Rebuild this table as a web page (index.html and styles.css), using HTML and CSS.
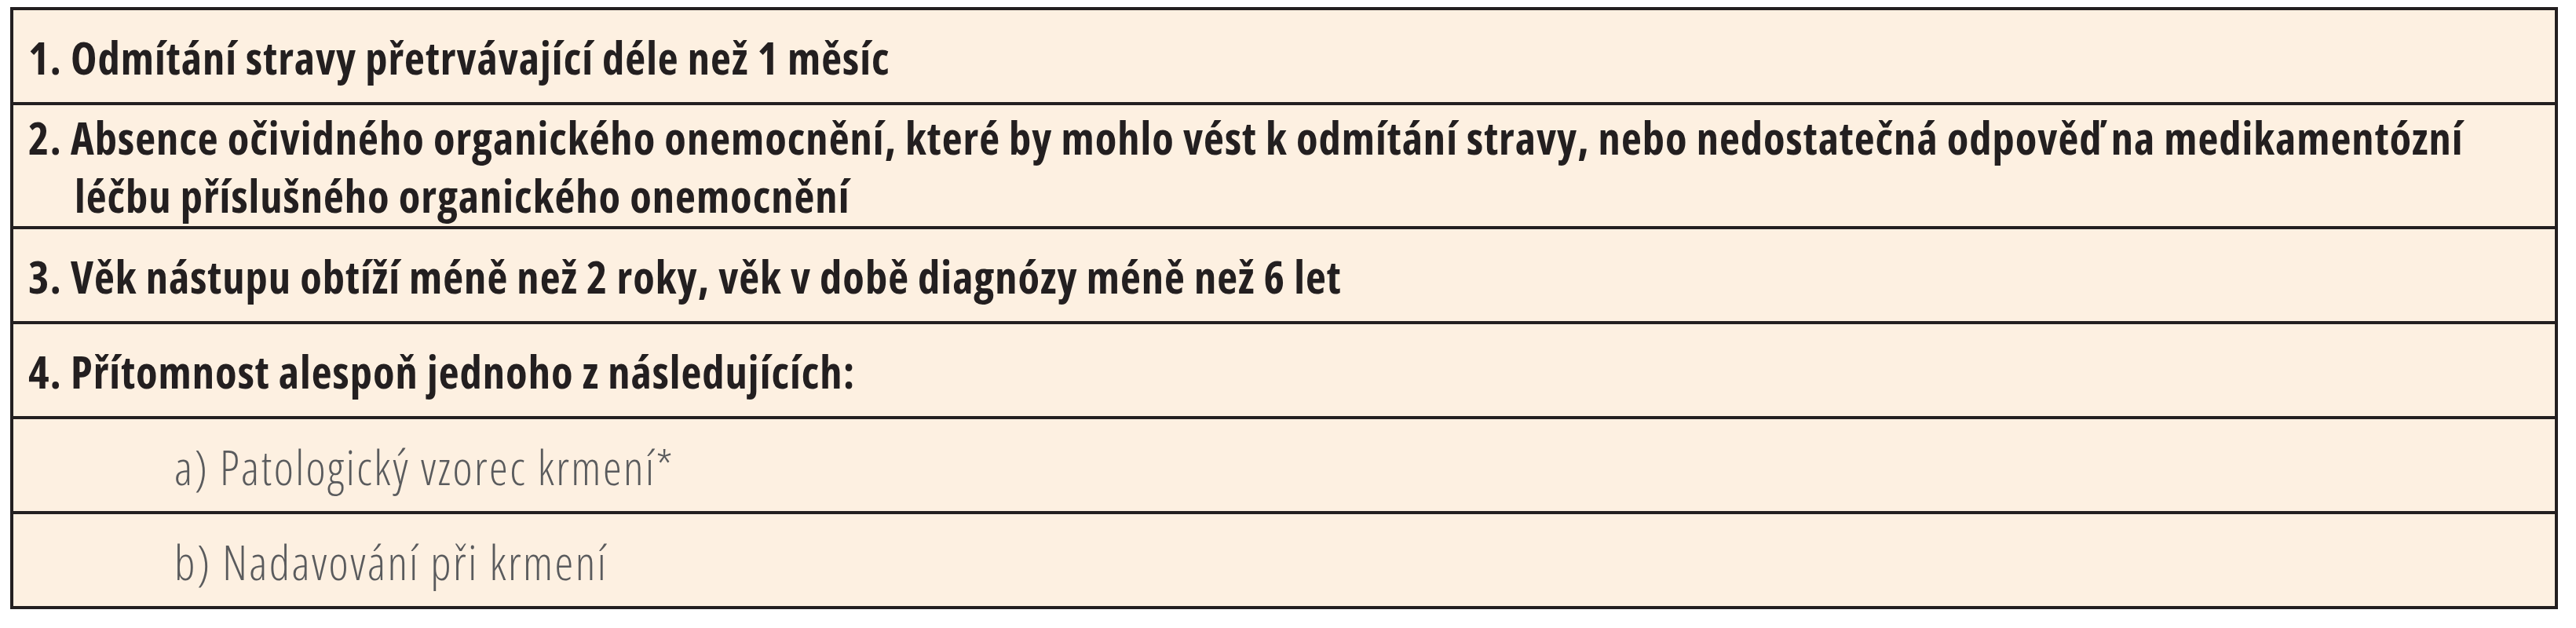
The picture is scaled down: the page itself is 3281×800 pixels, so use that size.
FILE: index.html
```html
<!DOCTYPE html>
<html lang="cs">
<head>
<meta charset="utf-8">
<title>Kritéria</title>
<link rel="stylesheet" href="styles.css">
</head>
<body>
<div class="criteria">
  <div class="row main"><p>1. Odmítání stravy přetrvávající déle než 1 měsíc</p></div>
  <div class="row main"><p>2. Absence očividného organického onemocnění, které by mohlo vést k odmítání stravy, nebo nedostatečná odpověď na medikamentózní léčbu příslušného organického onemocnění</p></div>
  <div class="row main"><p>3. Věk nástupu obtíží méně než 2 roky, věk v době diagnózy méně než 6 let</p></div>
  <div class="row main"><p>4. Přítomnost alespoň jednoho z následujících:</p></div>
  <div class="row sub"><p>a) Patologický vzorec krmení*</p></div>
  <div class="row sub"><p>b) Nadavování při krmení</p></div>
</div>
</body>
</html>
```
FILE: styles.css
```css
html, body {
  margin: 0;
  padding: 0;
  background: #ffffff;
}

.criteria {
  margin: 9px 0 0 13px;
  width: 3245px;
  box-sizing: border-box;
  border: 4px solid #231f20;
  background: #fdf0e1;
}

.row {
  display: flex;
  align-items: center;
  min-height: 111px;
  padding: 5px 0 1px;
  border-top: 4px solid #231f20;
}

.row:first-child {
  border-top: 0;
}

.row p {
  margin: 0;
  font-family: "Open Sans", "DejaVu Sans Condensed", sans-serif;
  font-stretch: 75%;
  line-height: 74px;
}

.main p {
  padding-left: 78px;
  padding-right: 20px;
  text-indent: -59px;
  font-size: 56.5px;
  letter-spacing: 1px;
  font-weight: 700;
  color: #231f20;
}

.sub p {
  padding-left: 205px;
  font-size: 60px;
  letter-spacing: 2.4px;
  font-weight: 300;
  color: #5a5b5d;
}
```
